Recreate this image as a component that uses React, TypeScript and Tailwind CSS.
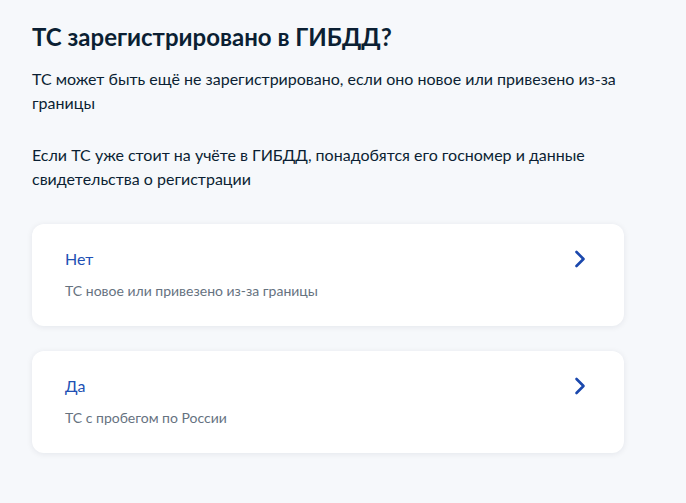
const options = [
  { title: 'Нет', hint: 'ТС новое или привезено из-за границы' },
  { title: 'Да', hint: 'ТС с пробегом по России' },
];

function Chevron() {
  return (
    <svg width="12" height="18" viewBox="0 0 12 18" fill="none">
      <path d="M2.5 2l7 7-7 7" stroke="#1b48ad" strokeWidth="2.6" strokeLinecap="round" strokeLinejoin="round" />
    </svg>
  );
}

export default function App() {
  return (
    <div className="min-h-[503px] w-[686px] bg-[#f6f8fb] px-8 pt-[22px] text-[#0b1f33] font-['Lato','Noto_Sans',sans-serif]">
      <h1 className="text-[24px] font-bold leading-[30px]">ТС зарегистрировано в ГИБДД?</h1>
      <p className="mt-[15px] text-[16px] leading-[24px]">
        ТС может быть ещё не зарегистрировано, если оно новое или привезено из-за границы
      </p>
      <p className="mt-[28px] text-[16px] leading-[24px]">
        Если ТС уже стоит на учёте в ГИБДД, понадобятся его госномер и данные свидетельства о регистрации
      </p>
      <div className="mt-[33px] flex w-[592px] flex-col gap-[25px]">
        {options.map((o) => (
          <div
            key={o.title}
            className="flex h-[102px] items-start justify-between rounded-xl bg-white pl-[33px] pr-[38px] pt-[24px] shadow-[0_1px_6px_rgba(11,31,51,0.08)]"
          >
            <div>
              <div className="text-[16px] leading-[22px] text-[#2150b4]">{o.title}</div>
              <div className="mt-[11px] text-[14px] leading-[20px] text-[#66727f]">{o.hint}</div>
            </div>
            <div className="pt-[2px]">
              <Chevron />
            </div>
          </div>
        ))}
      </div>
    </div>
  );
}
